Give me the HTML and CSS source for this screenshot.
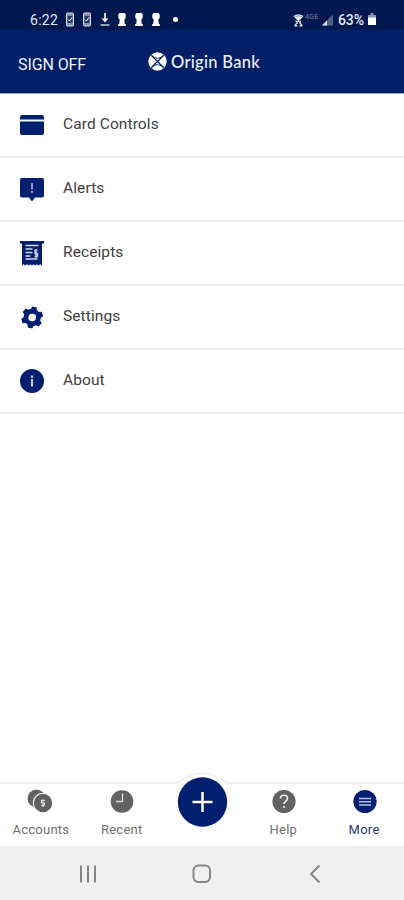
FILE: index.html
```
<!DOCTYPE html>
<html lang="en">
<head>
<meta charset="utf-8">
<title>Origin Bank</title>
<link rel="stylesheet" href="styles.css">
</head>
<body>
<div class="status">
  <span class="time">6:22</span>
  <div class="notices">
    <svg width="10" height="15" viewBox="0 0 10 15"><rect x="1.500" y="1" width="7" height="13" rx="1.200" fill="#8491b4" stroke="#dde2ee"/><rect x="2.500" y="4" width="5" height="7" fill="#24396e"/><path d="M3.200 7.500l1.300 1.500L7 5.500" fill="none" stroke="#fff"/></svg>
    <svg width="10" height="15" viewBox="0 0 10 15"><rect x="1.500" y="1" width="7" height="13" rx="1.200" fill="#8491b4" stroke="#dde2ee"/><rect x="2.500" y="4" width="5" height="7" fill="#24396e"/><path d="M3.200 7.500l1.300 1.500L7 5.500" fill="none" stroke="#fff"/></svg>
    <svg width="10" height="15" viewBox="0 0 10 15"><path d="M5 1v7" stroke="#fff" stroke-width="1.600"/><path d="M1.500 6.500h7L5 10.500z" fill="#fff"/><path d="M.5 13h9" stroke="#a5afc9" stroke-width="1.800"/></svg>
    <svg width="10" height="15" viewBox="0 0 10 15"><path d="M2.500 1h5l1.200 1.500v3.500L7.300 7.500l.5 4.500H8.800v2H1.200v-2h1L2.700 7.500 1.300 6V2.500z" fill="#fff"/></svg>
    <svg width="10" height="15" viewBox="0 0 10 15"><path d="M2.500 1h5l1.200 1.500v3.500L7.300 7.500l.5 4.500H8.800v2H1.200v-2h1L2.700 7.500 1.300 6V2.500z" fill="#fff"/></svg>
    <svg width="10" height="15" viewBox="0 0 10 15"><path d="M2.500 1h5l1.200 1.500v3.500L7.300 7.500l.5 4.500H8.800v2H1.200v-2h1L2.700 7.500 1.300 6V2.500z" fill="#fff"/></svg>
  </div>
  <span class="dot"></span>
  <div class="signals">
    <svg width="11" height="14" viewBox="0 0 11 14"><path d="M.5 3Q5.500-.5 10.500 3L7 7H4z" fill="#e4e8f2"/><path d="M2.500 3.500Q5.500 2 8.500 3.500" fill="none" stroke="#7380a4" stroke-width=".8"/><path d="M2.500 8.500h5.500M5.500 6v3M2 12.300L4.500 9.500M6.500 9.500l2.500 3M1.500 12.800h3M6.500 12.800h3" fill="none" stroke="#e4e8f2" stroke-width="1.300"/></svg>
    <span class="network">4GE</span>
    <svg class="cell" width="11" height="12" viewBox="0 0 11 12"><path d="M0 11.500L11 .5v11z" fill="#536388"/><path d="M0 11.500L5 6.500v5z" fill="#e6e2e9"/></svg>
  </div>
  <span class="percent">63%</span>
  <svg class="battery" width="8" height="13" viewBox="0 0 8 13"><path d="M2.500 0h3v2H8v3H0V2h2.500z" fill="#8995b5"/><path d="M0 4.500h8V12H0z" fill="#fff"/></svg>
</div>

<header class="header">
  <span class="signoff">SIGN OFF</span>
  <svg class="logo" width="19" height="19" viewBox="0 0 19 19"><circle cx="9.500" cy="9.500" r="9.200" fill="#fff"/><g fill="none" stroke="#001f69"><path d="M3.200 3.200Q9.500 9.500 15.800 3.200M3.200 15.800Q9.500 9.500 15.800 15.800" stroke-width=".9"/><path d="M3.500 3.500l12 12M15.500 3.500l-12 12" stroke-width="1.300"/></g></svg>
  <span class="brand">Origin Bank</span>
</header>

<main class="menu">
  <div class="row">
    <svg width="26" height="26" viewBox="0 0 26 26"><path d="M3 3h20q2 0 2 2v2.500H1V5q0-2 2-2zM1 9.500h24V21q0 2-2 2H3q-2 0-2-2z"/></svg>
    <span class="label">Card Controls</span>
  </div>
  <div class="row">
    <svg width="26" height="26" viewBox="0 0 26 26"><path d="M3 2h20q2 0 2 2v15.500q0 2-2 2h-7l-3 4-3-4H3q-2 0-2-2V4q0-2 2-2z"/><path class="mark" d="M13 7v6.500M13 15v2"/></svg>
    <span class="label">Alerts</span>
  </div>
  <div class="row">
    <svg width="26" height="26" viewBox="0 0 26 26"><path d="M1 1h24v2.500h-2v22l-1.700-1.300-1.700 1.300-1.700-1.300-1.600 1.300-1.700-1.300-1.600 1.300-1.700-1.300-1.600 1.300-1.700-1.300-1.700 1.300-1.700-1.300L3 25.500v-22H1z"/><path d="M6.500 5.500h13M6.500 9h7M6.500 12.500h7M6.500 16h5M6.500 19h12" class="lines"/><path d="M18.500 10.500h-2.500v3h2.500v3H15.500M17 9v9" class="mark"/></svg>
    <span class="label">Receipts</span>
  </div>
  <div class="row">
    <svg width="26" height="26" viewBox="0 0 26 26"><g transform="translate(13.200 13.500)"><path fill-rule="evenodd" d="M-2.300-10.800H2.300L3-8Q4.400-7.500 5.200-6.800L8.200-7.500 10.500-3.500 8.500-1.500Q8.700 0 8.500 1.500L10.500 3.500 8.200 7.500 5.200 6.800Q4.400 7.500 3 8L2.300 10.800H-2.300L-3 8Q-4.400 7.500-5.200 6.800L-8.200 7.500-10.500 3.500-8.500 1.500Q-8.700 0-8.500-1.500L-10.500-3.500-8.200-7.500-5.200-6.800Q-4.400-7.500-3-8zM0-3.800A3.800 3.800 0 1 0 0 3.800 3.800 3.800 0 1 0 0-3.800z" transform="rotate(12)"/></g></svg>
    <span class="label">Settings</span>
  </div>
  <div class="row">
    <svg width="26" height="26" viewBox="0 0 26 26"><circle cx="13" cy="13" r="12"/><path class="mark info" d="M13 7.500v2.200M13 11v7.500"/></svg>
    <span class="label">About</span>
  </div>
</main>

<nav class="tabs">
  <div class="tab">
    <svg width="28" height="26" viewBox="0 0 28 26"><circle cx="10.500" cy="9.500" r="9" fill="#626262"/><circle cx="17" cy="14" r="10.300" fill="#fff"/><circle cx="17" cy="14" r="9.200" fill="#626262"/><path d="M19 11.500h-3.500V14h3v2.500H15M17 10v8" fill="none" stroke="#ddd" stroke-width="1.100"/></svg>
    <span>Accounts</span>
  </div>
  <div class="tab">
    <svg width="28" height="26" viewBox="0 0 28 26"><circle cx="15" cy="12.500" r="11.300" fill="#626262"/><path d="M15.500 4.500v8H9" fill="none" stroke="#ddd" stroke-width="1.300"/></svg>
    <span>Recent</span>
  </div>
  <div class="tab">
    <svg class="add" width="60" height="60" viewBox="0 0 60 60"><path d="M0 11.500C6 11.500 9 9 14 5.500Q30-3 46 5.500C51 9 54 11.500 60 11.500" fill="#fff" stroke="#efefef" stroke-width="1.500"/><circle cx="30.500" cy="30" r="26" fill="#fff"/><circle cx="30.500" cy="30" r="24.700" fill="#001f70"/><path d="M30.500 20v20M20.500 30h20" stroke="#fff" stroke-width="2.500"/></svg>
  </div>
  <div class="tab">
    <svg width="28" height="26" viewBox="0 0 28 26"><circle cx="15" cy="12.500" r="11.600" fill="#626262"/><path d="M11.500 9.500q0-3.200 3.500-3.200t3.500 3.200q0 1.400-1.900 2.800-1.600 1.100-1.600 2.700M15 17v2" fill="none" stroke="#eee" stroke-width="1.600"/></svg>
    <span>Help</span>
  </div>
  <div class="tab active">
    <svg width="28" height="26" viewBox="0 0 28 26"><circle cx="15" cy="12.500" r="11.600" fill="#001f70"/><path d="M9 9.500h12M9 12.700h12M9 15.900h12" stroke="#b7c1dc" stroke-width="1.500"/></svg>
    <span>More</span>
  </div>
</nav>
<footer class="system">
  <svg width="18" height="20" viewBox="0 0 18 20"><path d="M2 1.500v17M9 1.500v17M16 1.500v17"/></svg>
  <svg width="20" height="20" viewBox="0 0 20 20"><rect x="1.500" y="1.500" width="16.500" height="16.500" rx="5"/></svg>
  <svg width="12" height="20" viewBox="0 0 12 20"><path d="M10.500 1.500L2 10l8.500 8.500"/></svg>
</footer>
</body>
</html>
```

FILE: styles.css
```
* { box-sizing: border-box; }
body {
  margin: 0;
  width: 404px;
  height: 900px;
  display: flex;
  flex-direction: column;
  background: #fff;
  font-family: Roboto, "Liberation Sans", sans-serif;
  overflow: hidden;
}
svg { display: block; flex: none; }

.status {
  height: 30px;
  padding: 9px 28px 0 30px;
  display: flex;
  align-items: center;
  background: #001850;
  color: #e4e8f2;
  font-size: 14px;
  line-height: 20px;
  white-space: nowrap;
}
.time { width: 35px; letter-spacing: .3px; }
.notices { display: flex; gap: 7.3px; }
.dot { width: 5px; height: 5px; margin-left: 12px; border-radius: 50%; background: #fff; }
.signals { display: flex; align-items: center; margin-left: auto; }
.network { width: 16px; margin: -6px 1px 0 1px; font-size: 7.500px; line-height: 8px; color: #7280a5; }
.percent { margin-left: 5px; width: 28px; font-weight: 500; letter-spacing: -.1px; }
.battery { margin-left: 2px; }

.header {
  height: 64px;
  padding-left: 18px;
  display: flex;
  background: #001f66;
  border-bottom: 1px solid #9ca6c2;
  color: #f0f3fa;
  white-space: nowrap;
}
.signoff { width: 129.500px; padding-top: 24px; font-size: 16px; line-height: 22px; letter-spacing: -.1px; }
.logo { margin-top: 22px; }
.brand { margin: 21px 0 0 4.500px; font-family: Lato, sans-serif; font-size: 16.500px; line-height: 22px; font-weight: 500; letter-spacing: .3px; }

.menu { flex: 1; }
.row {
  height: 64.100px;
  padding: 18px 19px 0;
  display: flex;
  gap: 18px;
  border-bottom: 2px solid #ececee;
}
.row svg { fill: #001f70; }
.label { padding-top: 1px; font-size: 15.500px; line-height: 22px; letter-spacing: .1px; color: #404040; }
.row .mark { fill: none; stroke: #c3cae2; stroke-width: 1.500; }
.row .info { stroke-width: 2.200; }
.row .lines { fill: none; stroke: #d5daea; stroke-width: 1.300; }

.tabs {
  height: 64px;
  display: grid;
  grid-template-columns: repeat(5, 80.800px);
  border-top: 2px solid #efefef;
}
.tab {
  padding-top: 5px;
  display: flex;
  flex-direction: column;
  align-items: center;
  font-size: 13px;
  line-height: 18px;
  letter-spacing: .25px;
  color: #707070;
}
.tab span { margin: 5.500px 0 0 1px; }
.active { color: #26367b; }
.add { margin-top: -17px; }
.system {
  height: 54px;
  padding: 1px 83px 0 79px;
  display: flex;
  align-items: center;
  justify-content: space-between;
  background: #f0f0f0;
}
.system svg { fill: none; stroke: #858585; stroke-width: 2; }
.system svg:nth-child(2) { margin-right: 3px; }
```
